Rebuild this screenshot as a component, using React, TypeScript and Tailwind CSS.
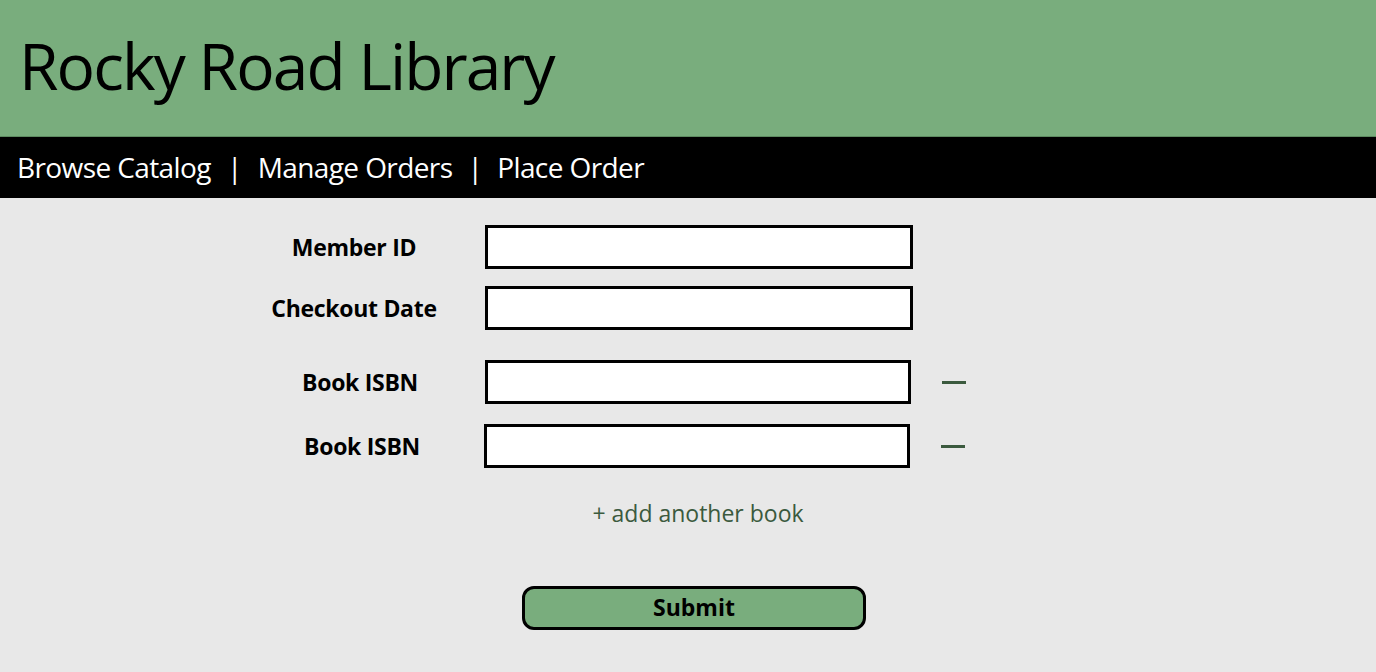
import React from "react";

function Row({ label, labelShift = 0, minus = false, inputW = 428, inputX = 0 }: { label: string; labelShift?: number; minus?: boolean; inputW?: number; inputX?: number }) {
  return (
    <div className="flex items-center h-[44px]">
      <div className="w-[200px] flex justify-center">
        <span className="text-[23px] font-bold text-black tracking-[-0.3px]" style={{ marginLeft: labelShift }}>{label}</span>
      </div>
      <div className="h-[44px] border-[3px] border-black bg-white" style={{ width: inputW, marginLeft: 31 + inputX }} />
      {minus && <div className="ml-[31px] w-[24px] h-[3px] bg-[#3b5a3e]" />}
    </div>
  );
}

export default function App() {
  return (
    <div className="min-h-[672px] bg-[#e8e8e8]" style={{ fontFamily: '"Open Sans", "Noto Sans", sans-serif' }}>
      <header className="h-[137px] bg-[#79ad7d] flex items-center px-[19px] pb-[5px] border-b border-[#5d8a60]">
        <h1 className="text-[64px] font-normal text-black tracking-[-1.9px] leading-none">Rocky Road Library</h1>
      </header>
      <nav className="h-[61px] bg-black flex items-center px-[17px] pb-[2px] text-white text-[28px] tracking-[-0.6px]">
        <span>Browse Catalog</span>
        <span className="mx-[16px]">|</span>
        <span>Manage Orders</span>
        <span className="mx-[15px]">|</span>
        <span>Place Order</span>
      </nav>
      <div className="pl-[254px] pt-[27px] flex flex-col">
        <Row label="Member ID" />
        <div className="h-[17px]" />
        <Row label="Checkout Date" />
        <div className="h-[30px]" />
        <Row label="Book ISBN" labelShift={12} minus inputW={426} />
        <div className="h-[20px]" />
        <Row label="Book ISBN" labelShift={16} minus inputW={426} inputX={-1} />
        <div className="w-[888px] flex justify-center mt-[28px]">
          <span className="text-[23px] text-[#3b5a3e]">+ add another book</span>
        </div>
        <div className="w-[880px] flex justify-center mt-[55px]">
          <button className="w-[344px] h-[44px] rounded-[12px] border-[3px] border-black bg-[#79ad7d] text-[23px] font-bold text-black">Submit</button>
        </div>
      </div>
    </div>
  );
}
